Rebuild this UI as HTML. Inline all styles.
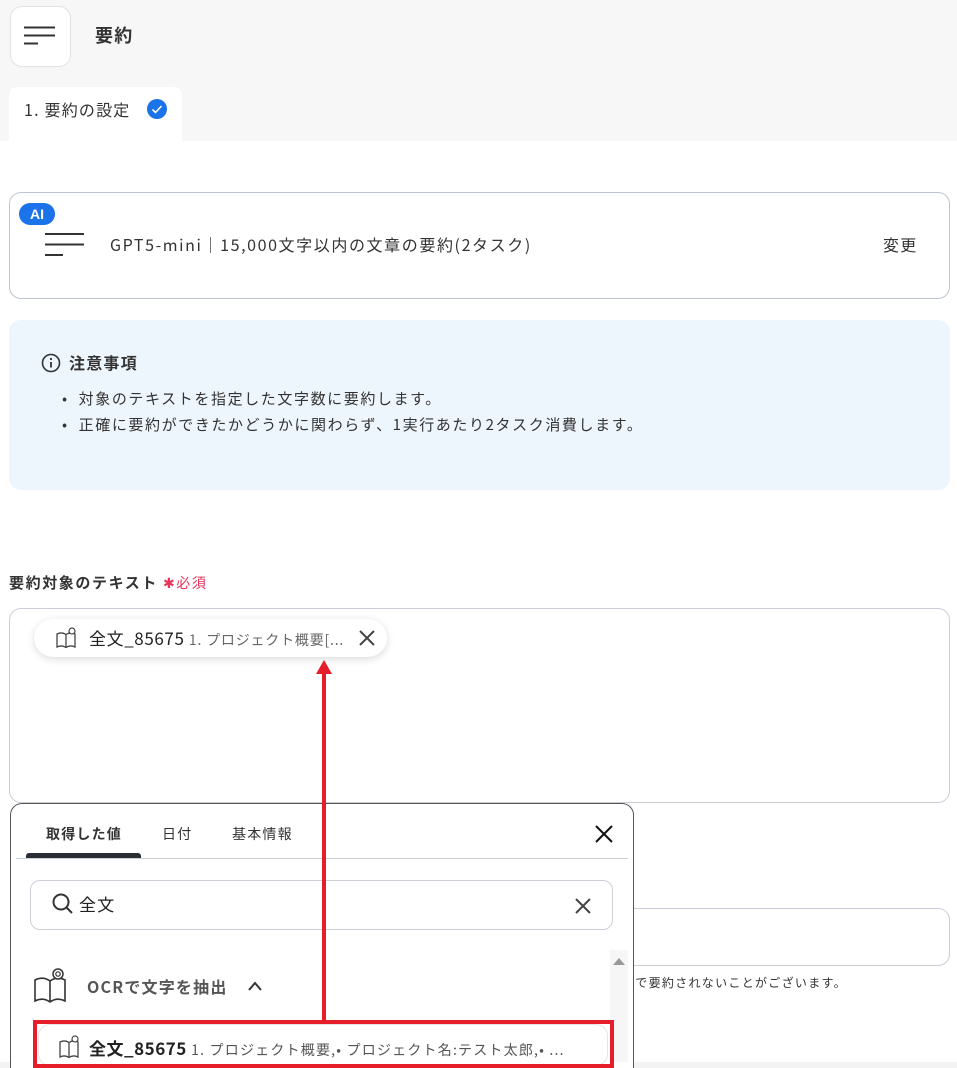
<!DOCTYPE html>
<html style="width:957px;height:1068px;overflow:hidden"><head><meta charset="utf-8"><style>
*{box-sizing:border-box;margin:0;padding:0}
body{width:957px;height:1068px;position:relative;overflow:hidden;background:#fff;font-family:"Noto Sans CJK JP","Liberation Sans",sans-serif;color:#222;letter-spacing:1.2px}
.a{position:absolute;white-space:nowrap}
.w{letter-spacing:1.6px}
</style></head><body>
<div class="a" style="left:0;top:0;width:957px;height:141px;background:#f7f7f7"></div>
<div class="a" style="left:10px;top:6px;width:61px;height:61px;background:#fff;border:1px solid #e2e2e2;border-radius:12px"></div>
<svg class="a" style="left:24px;top:26px" width="34" height="20"><path d="M0 1.5H31M0 9.5H31M0 17.5H14" stroke="#333" stroke-width="2"/></svg>
<div class="a" style="left:95px;top:22px;font-size:18px;font-weight:bold;color:#333;line-height:26px">要約</div>
<div class="a" style="left:9px;top:87px;width:173px;height:54px;background:#fff;border-radius:8px 8px 0 0"></div>
<div class="a" style="left:24px;top:97px;font-size:16px;color:#333;line-height:24px">1. 要約の設定</div>
<svg class="a" style="left:147px;top:99px" width="20" height="20"><circle cx="10" cy="10" r="10" fill="#1a73e8"/><path d="M5.5 10.5l3 3 6-6.5" stroke="#fff" stroke-width="1.6" fill="none"/></svg>

<div class="a" style="left:9px;top:192px;width:941px;height:107px;border:1px solid #bfc5cf;border-radius:12px"></div>
<div class="a" style="left:19px;top:203px;width:36px;height:22px;background:#1a73e8;border-radius:11px;color:#fff;font-weight:bold;font-size:14px;text-align:center;line-height:22px;letter-spacing:0;font-family:'Liberation Sans',sans-serif">AI</div>
<svg class="a" style="left:45px;top:233px" width="40" height="24"><path d="M0 1H39M0 11.5H39M0 22H18" stroke="#333" stroke-width="2"/></svg>
<div class="a w" style="left:110px;top:232px;font-size:16px;color:#333;line-height:24px">GPT5-mini｜15,000文字以内の文章の要約(2タスク)</div>
<div class="a" style="left:883px;top:232px;font-size:16px;color:#333;line-height:24px">変更</div>

<div class="a" style="left:9px;top:320px;width:941px;height:170px;background:#edf5fd;border-radius:12px"></div>
<svg class="a" style="left:41px;top:353px" width="20" height="20"><circle cx="10" cy="10" r="8.5" stroke="#333" stroke-width="1.6" fill="none"/><path d="M10 9v5.5" stroke="#333" stroke-width="1.8"/><circle cx="10" cy="6" r="1.1" fill="#333"/></svg>
<div class="a" style="left:69px;top:350px;font-size:16px;font-weight:bold;color:#333;line-height:24px">注意事項</div>
<div class="a w" style="left:62px;top:386px;font-size:15px;color:#333;line-height:26px">• &nbsp;対象のテキストを指定した文字数に要約します。<br>• &nbsp;正確に要約ができたかどうかに関わらず、1実行あたり2タスク消費します。</div>

<div class="a w" style="left:9px;top:571px;font-size:15px;font-weight:bold;color:#333;line-height:24px">要約対象のテキスト <span style="color:#e8335a;font-weight:normal;font-size:14px">✱必須</span></div>
<div class="a" style="left:9px;top:608px;width:941px;height:195px;border:1px solid #c9ced6;border-radius:12px"></div>
<div class="a" style="left:34px;top:619px;width:353px;height:38px;background:#fff;border-radius:19px;box-shadow:0 2px 8px rgba(0,0,0,.15)"></div>
<svg class="a" style="left:55px;top:626px" width="24" height="24"><path d="M2 8v13c3-1.5 6-1.5 9 .5c3-2 6-2 9-.5V8c-3-1.5-6-1.5-9 .5C8 6.5 5 6.5 2 8zM11 8.5V21" stroke="#444" stroke-width="1.3" fill="none"/><circle cx="17" cy="5" r="3" stroke="#444" stroke-width="1.2" fill="#fff"/></svg>
<div class="a" style="left:89px;top:625px;font-size:17px;color:#222;line-height:26px;letter-spacing:0.6px">全文_85675 <span style="font-size:14px;color:#666;letter-spacing:0.8px">1. プロジェクト概要[...</span></div>
<svg class="a" style="left:359px;top:630px" width="16" height="16"><path d="M1 1L15 15M15 1L1 15" stroke="#444" stroke-width="2"/></svg>

<div class="a" style="left:620px;top:908px;width:330px;height:58px;border:1px solid #c9ced6;border-radius:12px"></div>
<div class="a" style="left:622px;top:974px;font-size:12px;color:#333;line-height:18px;letter-spacing:1.3px">内で要約されないことがございます。</div>
<div class="a" style="left:0;top:1062px;width:957px;height:6px;background:#f3f3f3"></div>

<div class="a" style="left:10px;top:803px;width:624px;height:300px;background:#fff;border:1px solid #555;border-radius:12px"></div>
<div class="a" style="left:46px;top:823px;font-size:14px;font-weight:bold;color:#333;line-height:22px">取得した値</div>
<div class="a" style="left:162px;top:823px;font-size:14px;color:#333;line-height:22px">日付</div>
<div class="a" style="left:232px;top:823px;font-size:14px;color:#333;line-height:22px">基本情報</div>
<div class="a" style="left:26px;top:853px;width:115px;height:5px;background:#2a2f36;border-radius:3px 3px 0 0"></div>
<div class="a" style="left:16px;top:858px;width:612px;height:1px;background:#ccd1d8"></div>
<svg class="a" style="left:594px;top:824px" width="20" height="20"><path d="M2 2L18 18M18 2L2 18" stroke="#111" stroke-width="2"/></svg>
<div class="a" style="left:30px;top:880px;width:583px;height:50px;border:1px solid #ccd1d8;border-radius:10px"></div>
<svg class="a" style="left:51px;top:892px" width="24" height="24"><circle cx="10" cy="10" r="7.5" stroke="#333" stroke-width="2" fill="none"/><path d="M15.5 15.5L21 21" stroke="#333" stroke-width="2"/></svg>
<div class="a" style="left:79px;top:891px;font-size:17px;color:#222;line-height:26px">全文</div>
<svg class="a" style="left:575px;top:898px" width="16" height="16"><path d="M1 1L15 15M15 1L1 15" stroke="#444" stroke-width="2"/></svg>
<div class="a" style="left:610px;top:950px;width:18px;height:112px;background:#f6f6f6"></div>
<svg class="a" style="left:612px;top:956px" width="14" height="10"><path d="M1 9L7 2L13 9Z" fill="#999"/></svg>
<svg class="a" style="left:33px;top:966px" width="36" height="40"><path d="M2 14v21c5-2.5 10-2.5 15 1c5-3.5 10-3.5 15-1V14c-5-2.5-10-2.5-15 1C12 11.5 7 11.5 2 14zM17 15V36" stroke="#333" stroke-width="1.6" fill="none"/><circle cx="25" cy="8" r="5" stroke="#333" stroke-width="1.5" fill="#fff"/><circle cx="25" cy="8" r="2.2" stroke="#333" stroke-width="1.2" fill="none"/></svg>
<div class="a" style="left:87px;top:974px;font-size:16px;font-weight:bold;color:#555;line-height:24px">OCRで文字を抽出</div>
<svg class="a" style="left:247px;top:980px" width="16" height="12"><path d="M2 10L8 3L14 10" stroke="#333" stroke-width="2" fill="none"/></svg>
<div class="a" style="left:38px;top:1024px;width:570px;height:42px;background:#fff;border:1px solid #e4e4e4;border-radius:12px"></div>
<svg class="a" style="left:58px;top:1034px" width="24" height="26"><path d="M2 8v15c3-1.5 6-1.5 9 .5c3-2 6-2 9-.5V8c-3-1.5-6-1.5-9 .5C8 6.5 5 6.5 2 8zM11 8.5V23" stroke="#444" stroke-width="1.3" fill="none"/><circle cx="17" cy="5" r="3" stroke="#444" stroke-width="1.2" fill="#fff"/></svg>
<div class="a" style="left:89px;top:1035px;font-size:17px;font-weight:bold;color:#222;line-height:26px;letter-spacing:0.5px">全文_85675 <span style="font-size:14px;font-weight:normal;color:#555;letter-spacing:1.2px">1. プロジェクト概要,• プロジェクト名:テスト太郎,• ...</span></div>
<div class="a" style="left:33px;top:1020px;width:581px;height:48px;border:4px solid #e61e2a"></div>
<div class="a" style="left:322px;top:672px;width:4px;height:350px;background:#e61e2a"></div>
<svg class="a" style="left:316px;top:660px" width="16" height="14"><path d="M8 0L16 14H0Z" fill="#e61e2a"/></svg>
</body></html>
